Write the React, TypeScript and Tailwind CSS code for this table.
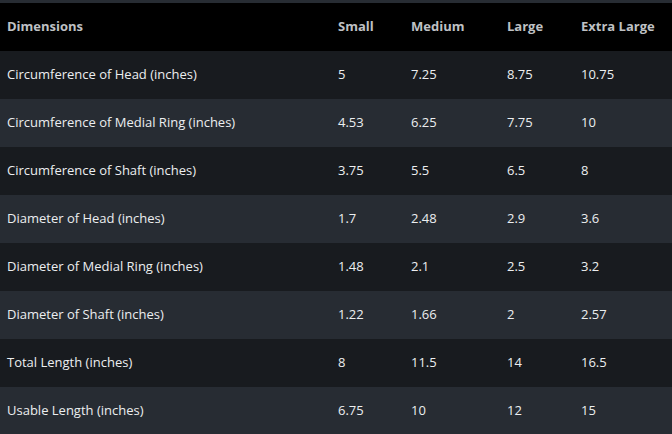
const sizes = ['Small', 'Medium', 'Large', 'Extra Large'];

const rows: [string, string[]][] = [
  ['Circumference of Head (inches)', ['5', '7.25', '8.75', '10.75']],
  ['Circumference of Medial Ring (inches)', ['4.53', '6.25', '7.75', '10']],
  ['Circumference of Shaft (inches)', ['3.75', '5.5', '6.5', '8']],
  ['Diameter of Head (inches)', ['1.7', '2.48', '2.9', '3.6']],
  ['Diameter of Medial Ring (inches)', ['1.48', '2.1', '2.5', '3.2']],
  ['Diameter of Shaft (inches)', ['1.22', '1.66', '2', '2.57']],
  ['Total Length (inches)', ['8', '11.5', '14', '16.5']],
  ['Usable Length (inches)', ['6.75', '10', '12', '15']],
];

export default function App() {
  return (
    <div className="h-[434px] w-[672px] overflow-hidden bg-[#272c33] pt-[3px] font-['Open_Sans',sans-serif] text-[13px]">
      <table className="w-full table-fixed border-collapse">
        <colgroup>
          <col className="w-[331px]" />
          <col className="w-[73px]" />
          <col className="w-[96px]" />
          <col className="w-[74px]" />
          <col />
        </colgroup>
        <thead className="bg-black text-[#bfc1c4]">
          <tr className="h-12">
            <th className="px-[7px] text-left font-bold">Dimensions</th>
            {sizes.map((s) => (
              <th key={s} className="px-[7px] text-left font-bold">
                {s}
              </th>
            ))}
          </tr>
        </thead>
        <tbody className="text-[#eceef0]">
          {rows.map(([label, values], i) => (
            <tr key={label} className={`h-12 ${i % 2 === 0 ? 'bg-[#181b1f]' : 'bg-[#272c33]'}`}>
              <td className="px-[7px]">{label}</td>
              {values.map((v, j) => (
                <td key={j} className="px-[7px]">
                  {v}
                </td>
              ))}
            </tr>
          ))}
        </tbody>
      </table>
    </div>
  );
}
